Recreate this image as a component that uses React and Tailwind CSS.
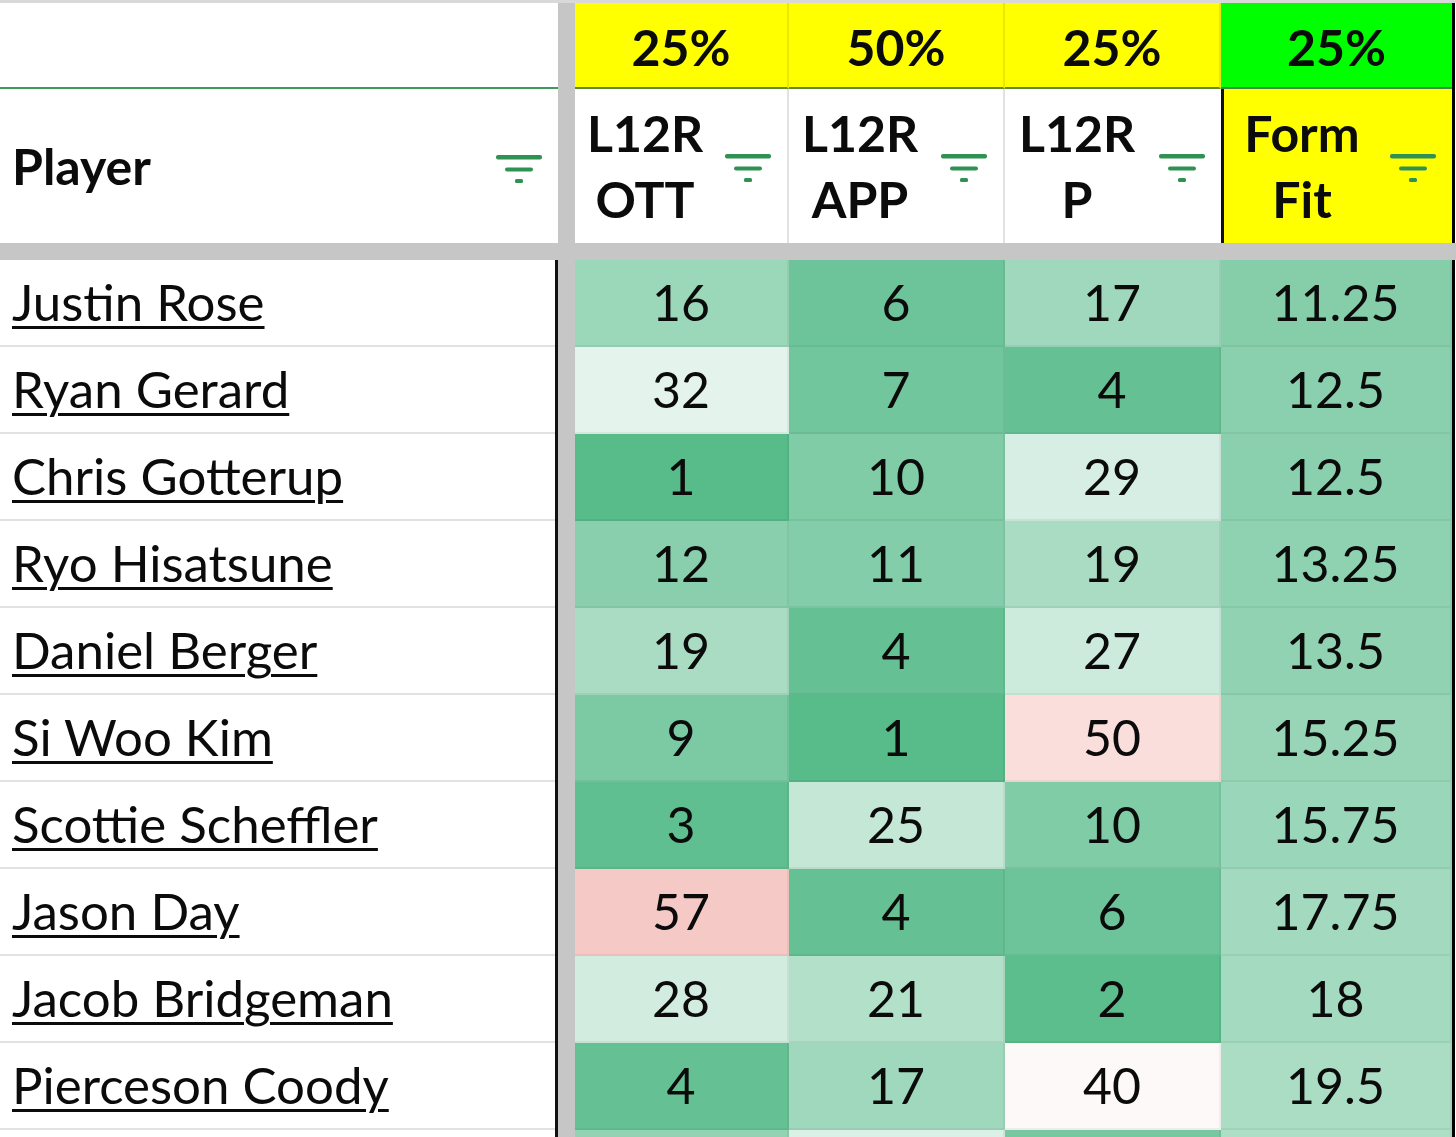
import React from 'react';

const GREEN = [87, 187, 138];
const WHITE = [255, 255, 255];
const RED = [230, 124, 115];

// Sheets-style 3 colour scale: green (low) -> white (mid) -> red (high)
const scaleColor = (v) => {
  const min = 1;
  const mid = 38;
  const max = 85;
  let to = GREEN;
  let t = 0;
  if (v <= mid) {
    t = Math.min(1, (mid - v) / (mid - min));
  } else {
    to = RED;
    t = Math.min(1, (v - mid) / (max - mid));
  }
  const c = WHITE.map((w, i) => Math.round(w + (to[i] - w) * t));
  return `rgb(${c[0]}, ${c[1]}, ${c[2]})`;
};

const rows = [
  ['Justin Rose', '16', '6', '17', '11.25'],
  ['Ryan Gerard', '32', '7', '4', '12.5'],
  ['Chris Gotterup', '1', '10', '29', '12.5'],
  ['Ryo Hisatsune', '12', '11', '19', '13.25'],
  ['Daniel Berger', '19', '4', '27', '13.5'],
  ['Si Woo Kim', '9', '1', '50', '15.25'],
  ['Scottie Scheffler', '3', '25', '10', '15.75'],
  ['Jason Day', '57', '4', '6', '17.75'],
  ['Jacob Bridgeman', '28', '21', '2', '18'],
  ['Pierceson Coody', '4', '17', '40', '19.5'],
];

// next row peeks in under the bottom edge, only its colours show
const nextRow = [14, 30, 8, 20];

const colWidths = ['w-[214px]', 'w-[216px]', 'w-[216px]', 'w-[231px]'];

const FilterIcon = () => (
  <svg width="46" height="28" viewBox="0 0 46 28" className="shrink-0">
    <rect x="0" y="0" width="46" height="4.5" rx="2" fill="#2f9152" />
    <rect x="9" y="12.5" width="28" height="4" rx="2" fill="#2f9152" />
    <rect x="19" y="24" width="8" height="4" rx="1.5" fill="#2f9152" />
  </svg>
);

const Divider = () => <div className="w-[17px] shrink-0 bg-[#c6c6c6]" />;

const RightEdge = () => (
  <div className="flex w-[4px] shrink-0">
    <div className="w-[3px] bg-black" />
    <div className="w-[1px] bg-white" />
  </div>
);

const HeaderCell = ({ top, bottom, className }) => (
  <div className={`flex items-center pr-[16px] ${className}`}>
    <div className="flex-1 text-center font-bold leading-[66px]">
      <div>{top}</div>
      <div>{bottom}</div>
    </div>
    <div className="ml-[10px] mt-[4px]">
      <FilterIcon />
    </div>
  </div>
);

const NameCell = ({ children }) => (
  <div className="flex w-[558px] shrink-0">
    <div className="flex flex-1 items-center border-b-2 border-[#e2e2e2] bg-white pl-[12px]">
      {children}
    </div>
    <div className="w-[3px] bg-[#111]" />
  </div>
);

export default function App() {
  return (
    <div
      className="h-[1137px] w-[1456px] overflow-hidden bg-white text-[50px] text-[#0b0b0b]"
      style={{ fontFamily: 'Lato, "Open Sans", sans-serif' }}
    >
      <div className="h-[3px] bg-[#d9d9d9]" />

      {/* weights row */}
      <div className="flex h-[86px]">
        <div className="w-[558px] shrink-0 border-b-2 border-[#3c9a5b] bg-white" />
        <Divider />
        {['25%', '50%', '25%'].map((p, i) => (
          <div
            key={i}
            className={`${colWidths[i]} flex items-center justify-center border-b-2 border-r-2 border-b-[#5d8a3a] border-r-[#e8e800] bg-[#ffff00] pt-[4px] font-bold`}
          >
            {p}
          </div>
        ))}
        <div className="flex w-[231px] items-center justify-center border-b-2 border-[#3f8a45] bg-[#00ff00] pt-[4px] font-bold">
          25%
        </div>
        <RightEdge />
      </div>

      {/* column headings */}
      <div className="flex h-[154px]">
        <div className="flex w-[558px] shrink-0 items-center justify-between bg-white pl-[12px] pr-[16px]">
          <span className="font-bold">Player</span>
          <div className="mt-[6px]">
            <FilterIcon />
          </div>
        </div>
        <Divider />
        <HeaderCell top="L12R" bottom="OTT" className="w-[214px] border-r-2 border-[#e2e2e2] bg-white" />
        <HeaderCell top="L12R" bottom="APP" className="w-[216px] border-r-2 border-[#e2e2e2] bg-white" />
        <HeaderCell top="L12R" bottom="P" className="w-[216px] bg-white" />
        <HeaderCell top="Form" bottom="Fit" className="w-[231px] border-l-[3px] border-[#111] bg-[#ffff00]" />
        <RightEdge />
      </div>

      <div className="h-[17px] bg-[#c6c6c6]" />

      {/* data rows */}
      {rows.map(([name, ...vals]) => (
        <div key={name} className="flex h-[87px]">
          <NameCell>
            <span className="text-[51px] underline decoration-[3px] underline-offset-[5px]">{name}</span>
          </NameCell>
          <Divider />
          {vals.map((v, i) => (
            <div
              key={i}
              className={`${colWidths[i]} flex items-center justify-center border-b-2 border-r-2 border-black/5`}
              style={{ backgroundColor: scaleColor(parseFloat(v)) }}
            >
              {v}
            </div>
          ))}
          <RightEdge />
        </div>
      ))}

      <div className="flex h-[87px]">
        <NameCell />
        <Divider />
        {nextRow.map((v, i) => (
          <div
            key={i}
            className={`${colWidths[i]} border-r-2 border-black/5`}
            style={{ backgroundColor: scaleColor(v) }}
          />
        ))}
        <RightEdge />
      </div>
    </div>
  );
}
